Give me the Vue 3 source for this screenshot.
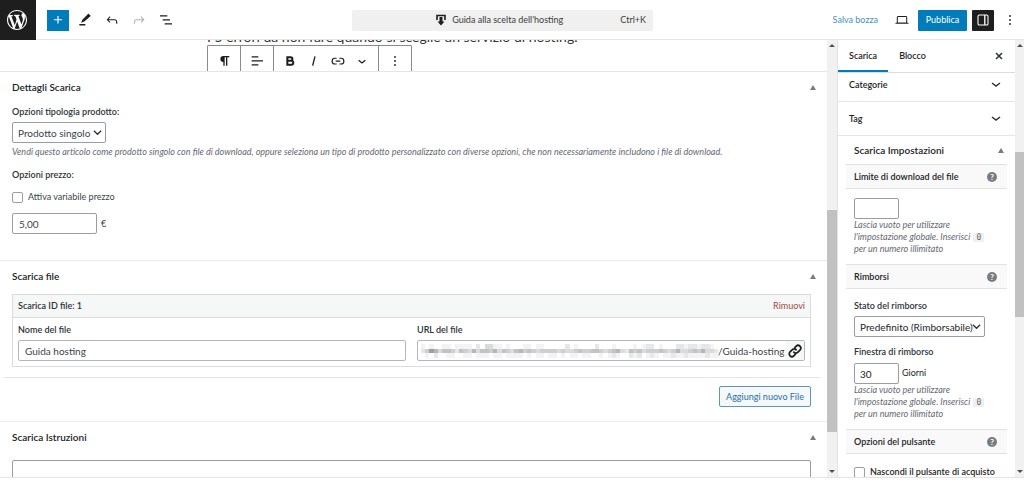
<script setup>
import { ref } from 'vue'

const productType = ref('single')
const variable = ref(false)
const price = ref('5,00')
const fileName = ref('Guida hosting')
const limit = ref('')
const refund = ref('default')
const days = ref('30')
const hideButton = ref(false)

// Mosaic levels (0 = white, 9 = darkest) that mask the private part of the URL
const mosaicRows = [
  '1010011011110203311010001101100000201000020001000010122010002212212210',
  '2486355425436355463543564543444434334544554345632545344454346334546332',
  '0102001100110111011011110101101101011011001012100212012101121121111211',
]
const mosaic = mosaicRows.flatMap((row, y) =>
  [...row].map((v, x) => ({ x, y, fill: `rgba(80,84,88,${Number(v) * 0.07})` }))
)
</script>

<template>
  <div class="editor">
    <header class="topbar">
      <div class="tools">
        <a class="logo" href="#" aria-label="WordPress">
          <svg width="24" height="24" viewBox="-2 -2 24 24" fill="currentColor">
            <path d="M20 10c0-5.51-4.49-10-10-10C4.48 0 0 4.49 0 10c0 5.52 4.48 10 10 10 5.51 0 10-4.48 10-10zM7.78 15.37L4.37 6.22c.55-.02 1.17-.08 1.17-.08.5-.06.44-1.13-.06-1.11 0 0-1.45.11-2.37.11-.18 0-.37 0-.58-.01C4.12 2.69 6.87 1.11 10 1.11c2.33 0 4.45.87 6.05 2.34-.68-.11-1.65.39-1.65 1.58 0 .74.45 1.36.9 2.1.35.61.55 1.36.55 2.46 0 1.49-1.4 5-1.4 5l-3.03-8.37c.54-.02.82-.17.82-.17.5-.05.44-1.25-.06-1.22 0 0-1.44.12-2.38.12-.87 0-2.33-.12-2.33-.12-.5-.03-.56 1.2-.06 1.22l.92.08 1.26 3.41zM17.41 10c.24-.64.74-1.87.43-4.25.7 1.29 1.05 2.71 1.05 4.25 0 3.29-1.73 6.24-4.4 7.78.97-2.59 1.94-5.2 2.92-7.78zM6.1 18.09C3.12 16.65 1.11 13.53 1.11 10c0-1.3.23-2.48.72-3.59C3.25 10.3 4.67 14.2 6.1 18.09zm4.03-6.63l2.58 6.98c-.86.29-1.76.45-2.71.45-.79 0-1.57-.11-2.29-.33.81-2.38 1.62-4.74 2.42-7.1z"/>
          </svg>
        </a>
        <button class="add" aria-label="Aggiungi blocco">
          <svg width="14" height="14" viewBox="0 0 24 24" fill="currentColor"><path d="M11 12.500V18h2v-5.500H19v-2h-6V5h-2v5.500H5v2z"/></svg>
        </button>
        <button aria-label="Strumenti">
          <svg width="16" height="16" viewBox="0 0 24 24" fill="currentColor"><path d="M20.100 5.100 17.900 3c-.4-.4-1-.4-1.400 0L8 11.700 6.200 16l4.800-1.600 9.100-8.100c.4-.3.400-.9 0-1.200zM3.500 18h9v2.200h-9z"/></svg>
        </button>
        <button aria-label="Annulla">
          <svg width="16" height="16" viewBox="0 0 24 24" fill="currentColor"><path d="M18.300 11.700c-.6-.6-1.400-.9-2.300-.9H6.700l2.900-3.300-1.100-1-4.500 5L8.500 16l1-1-2.700-2.700H16c.5 0 .9.200 1.300.5 1 1 1 3.400 1 4.500v.300h1.700v-.2c0-1.500 0-4.300-1.700-5.700z"/></svg>
        </button>
        <button class="dim" aria-label="Ripeti" disabled>
          <svg width="16" height="16" viewBox="0 0 24 24" fill="currentColor"><path d="M15.600 6.500l-1.100 1 2.900 3.300H8c-.9 0-1.700.3-2.300.9-1.400 1.500-1.400 4.200-1.400 5.600v.2h1.500v-.3c0-1.100 0-3.500 1-4.500.3-.3.700-.5 1.300-.5h9.200L14.500 15l1.100 1.100 4.600-4.600-4.600-5z"/></svg>
        </button>
        <button aria-label="Panoramica documento">
          <svg width="16" height="16" viewBox="0 0 24 24" fill="currentColor"><path d="M3 5h11v1.800H3zM7 11h11v1.800H7zM10 17h11v1.800H10z"/></svg>
        </button>
      </div>
      <button class="command">
        <svg width="10" height="12" viewBox="0 0 10 12"><path d="M1 6V1.500h8V6" fill="none" stroke="#1e1e1e" stroke-width="1.600"/><path d="M3.500 3h3v4.500h2L5 11.500 1.500 7.500h2z" fill="#1e1e1e"/></svg>
        <span>Guida alla scelta dell'hosting</span>
        <kbd>Ctrl+K</kbd>
      </button>
      <div class="actions">
        <button class="save">Salva bozza</button>
        <button class="preview" aria-label="Anteprima">
          <svg width="16" height="16" viewBox="0 0 24 24" fill="currentColor"><path d="M20.500 16h-.7V8c0-1.100-.9-2-2-2H6.200c-1.100 0-2 .9-2 2v8h-.7c-.8 0-1.500.7-1.500 1.500h20c0-.8-.7-1.500-1.500-1.500zM5.700 8c0-.3.200-.5.500-.5h11.600c.3 0 .5.200.5.500v7.600H5.700V8z"/></svg>
        </button>
        <button class="publish">Pubblica</button>
        <button class="panel-toggle" aria-label="Impostazioni">
          <svg width="16" height="16" viewBox="0 0 24 24"><rect x="4.500" y="4.500" width="15" height="15" rx="2" fill="none" stroke="#fff" stroke-width="1.600"/><path d="M14.700 4.500v15" stroke="#fff" stroke-width="2"/></svg>
        </button>
        <button class="more" aria-label="Opzioni">
          <svg width="4" height="12" viewBox="0 0 4 12" fill="currentColor"><circle cx="2" cy="2" r="0.900"/><circle cx="2" cy="6" r="0.900"/><circle cx="2" cy="10" r="0.900"/></svg>
        </button>
      </div>
    </header>

    <div class="workspace">
      <main class="content">
        <section class="canvas">
          <p>I 5 errori da non fare quando si sceglie un servizio di hosting.</p>
          <div class="blockbar">
            <div class="cell"><button aria-label="Paragrafo"><svg width="16" height="16" viewBox="0 0 24 24" fill="currentColor"><path d="M11 4.500a4.500 4.500 0 0 0 0 9V19h2V6.500h2V19h2V6.500h3v-2z"/></svg></button></div>
            <div class="cell"><button aria-label="Allinea"><svg width="16" height="16" viewBox="0 0 24 24" fill="currentColor"><path d="M4 5h10v1.800H4zM4 11h17v1.800H4zM4 17h10v1.800H4z"/></svg></button></div>
            <div class="cell wide">
              <button aria-label="Grassetto"><svg width="16" height="16" viewBox="0 0 24 24" fill="none" stroke="currentColor" stroke-width="3"><path d="M8 6.500h5a2.600 2.600 0 0 1 0 5.200H8zM8 11.700h6a2.900 2.900 0 0 1 0 5.800H8z"/></svg></button>
              <button aria-label="Corsivo"><svg width="16" height="16" viewBox="0 0 24 24" fill="none" stroke="currentColor" stroke-width="2"><path d="M13.500 5 10 19"/></svg></button>
              <button aria-label="Link"><svg width="16" height="16" viewBox="0 0 24 24" fill="none" stroke="currentColor" stroke-width="1.800"><path d="M10 16.500H7.500a4.300 4.300 0 0 1 0-8.600H10M14 7.900h2.500a4.300 4.300 0 0 1 0 8.600H14M8.500 12.200h7"/></svg></button>
              <button aria-label="Altro"><svg width="16" height="16" viewBox="0 0 24 24" fill="none" stroke="currentColor" stroke-width="2"><path d="m7 11 5 4 5-4"/></svg></button>
            </div>
            <div class="cell"><button aria-label="Opzioni blocco"><svg width="4" height="12" viewBox="0 0 4 12" fill="currentColor"><circle cx="2" cy="2" r="0.900"/><circle cx="2" cy="6" r="0.900"/><circle cx="2" cy="10" r="0.900"/></svg></button></div>
          </div>
        </section>

        <section class="box details">
          <div class="box-head"><h2>Dettagli Scarica</h2><button class="tri" aria-label="Comprimi"></button></div>
          <label class="title" for="ptype">Opzioni tipologia prodotto:</label>
          <div class="select short">
            <select id="ptype" v-model="productType"><option value="single">Prodotto singolo</option></select>
            <svg width="9" height="9" viewBox="0 0 10 10"><path d="m1 3 4 4 4-4"/></svg>
          </div>
          <p class="hint">Vendi questo articolo come prodotto singolo con file di download, oppure seleziona un tipo di prodotto personalizzato con diverse opzioni, che non necessariamente includono i file di download.</p>
          <label class="title price-title" for="price">Opzioni prezzo:</label>
          <label class="check"><input v-model="variable" type="checkbox">Attiva variabile prezzo</label>
          <div class="price"><input id="price" v-model="price" type="text"><span>€</span></div>
        </section>

        <section class="box files">
          <div class="box-head"><h2>Scarica file</h2><button class="tri" aria-label="Comprimi"></button></div>
          <div class="file-card">
            <div class="file-head"><strong>Scarica ID file: 1</strong><a href="#">Rimuovi</a></div>
            <div class="file-grid">
              <div class="field"><label for="fname">Nome del file</label><input id="fname" v-model="fileName" type="text"></div>
              <div class="field">
                <label for="furl">URL del file</label>
                <div class="url">
                  <svg class="mosaic" viewBox="0 0 70 3" preserveAspectRatio="none" shape-rendering="crispEdges"><rect v-for="(c, i) in mosaic" :key="i" :x="c.x" :y="c.y" width="1" height="1" :fill="c.fill"/></svg>
                  <input id="furl" type="text" value="/Guida-hosting.pdf">
                  <button aria-label="Carica un file"><svg width="14" height="14" viewBox="0 0 24 24" fill="none" stroke="currentColor" stroke-width="3" stroke-linecap="round"><path d="M10 14a4.500 4.500 0 0 0 6.500.3l4-4a4.500 4.500 0 0 0-6.500-6.500l-2.300 2.300M14 10a4.500 4.500 0 0 0-6.500-.3l-4 4a4.500 4.500 0 0 0 6.500 6.500l2.300-2.300"/></svg></button>
                </div>
              </div>
            </div>
          </div>
          <div class="file-footer"><button>Aggiungi nuovo File</button></div>
        </section>

        <section class="box notes">
          <div class="box-head"><h2>Scarica Istruzioni</h2><button class="tri" aria-label="Comprimi"></button></div>
          <textarea aria-label="Scarica Istruzioni"></textarea>
        </section>
      </main>
      <div class="track track-main"><i class="up"></i><b></b><i class="down"></i></div>

      <aside class="sidebar">
        <div class="tabs">
          <button class="active">Scarica</button><button>Blocco</button>
          <button class="close" aria-label="Chiudi"><svg width="8" height="8" viewBox="0 0 8 8"><path d="m1 1 6 6M7 1 1 7"/></svg></button>
        </div>
        <button class="fold first">Categorie<svg width="10" height="10" viewBox="0 0 10 10"><path d="m1 3 4 3 4-3"/></svg></button>
        <button class="fold">Tag<svg width="10" height="10" viewBox="0 0 10 10"><path d="m1 3 4 3 4-3"/></svg></button>
        <div class="settings">
          <div class="settings-head"><h2>Scarica Impostazioni</h2><button class="tri" aria-label="Comprimi"></button></div>
          <h3>Limite di download del file<span class="help">?</span></h3>
          <div class="group">
            <input v-model="limit" class="small" type="text" aria-label="Limite di download del file">
            <p class="note">Lascia vuoto per utilizzare l'impostazione globale. Inserisci <code>0</code> per un numero illimitato</p>
          </div>
          <h3>Rimborsi<span class="help">?</span></h3>
          <div class="group">
            <label class="title" for="refund">Stato del rimborso</label>
            <div class="select">
              <select id="refund" v-model="refund"><option value="default">Predefinito (Rimborsabile)</option></select>
              <svg width="9" height="9" viewBox="0 0 10 10"><path d="m1 3 4 4 4-4"/></svg>
            </div>
            <label class="title window" for="days">Finestra di rimborso</label>
            <div class="days"><input id="days" v-model="days" class="small" type="text"><span>Giorni</span></div>
            <p class="note">Lascia vuoto per utilizzare l'impostazione globale. Inserisci <code>0</code> per un numero illimitato</p>
          </div>
          <h3>Opzioni del pulsante<span class="help">?</span></h3>
          <div class="group last"><label class="check"><input v-model="hideButton" type="checkbox">Nascondi il pulsante di acquisto</label></div>
        </div>
      </aside>
      <div class="track track-side"><i class="up"></i><b></b><i class="down"></i></div>
    </div>
  </div>
</template>

<style>
body { margin: 0; background: #fff; }
</style>

<style scoped>
* { box-sizing: border-box; }
.editor { height: 100vh; padding-bottom: 5px; display: flex; flex-direction: column; overflow: hidden; font: 9px/12px Lato, "Open Sans", sans-serif; color: #3c434a; background: #fff; }
button, input, select, textarea { font: inherit; color: inherit; margin: 0; padding: 0; }
button { border: 0; background: none; display: flex; align-items: center; justify-content: center; }
h2, h3, p { margin: 0; }
a { text-decoration: none; }
svg { flex: none; }

.topbar { flex: none; height: 40px; display: grid; grid-template-columns: 1fr 320px 1fr; align-items: center; border-bottom: 1px solid #e6e6e6; color: #1e1e1e; }
.logo { width: 36px; height: 40px; margin-right: 5px; background: #1e1e1e; color: #fff; display: flex; align-items: center; justify-content: center; padding-right: 3px; }
.tools { display: flex; align-items: center; gap: 6px; }
.tools button { width: 21px; height: 21px; }
.tools .add { background: #007cba; color: #fff; width: 22px; margin-right: -1px; }
.tools .dim { color: #b0b0b0; }
.command { width: 301px; height: 21px; background: #f0f0f0; border-radius: 2px; gap: 6px; padding: 0 7px; color: #3c3c3c; }
.command svg { margin-left: auto; }
.command kbd { font: inherit; margin-left: 51px; }
.actions { display: flex; align-items: center; justify-content: flex-end; padding-right: 12px; }
.save { color: #4b8fbb; margin-right: 16px; }
.preview { margin-right: 8px; }
.publish { background: #007cba; color: #fff; width: 49px; height: 21px; border-radius: 1px; margin-right: 5px; }
.panel-toggle { background: #1e1e1e; width: 22px; height: 21px; border-radius: 1px; margin-right: 14px; }

.workspace { flex: 1; min-height: 0; display: flex; border-bottom: 1px solid #e2e4e7; }
.content { flex: 1; min-width: 0; overflow: hidden; }
.canvas { height: 32px; overflow: hidden; padding-left: 207px; border-bottom: 1px solid #e6e6e6; }
.canvas p { font-size: 14px; line-height: 16px; margin-top: -11px; color: #333; white-space: nowrap; }
.blockbar { display: inline-flex; height: 32px; border: 1px solid #8a8a8a; border-radius: 1px; color: #1e1e1e; background: #fff; }
.cell { display: flex; align-items: center; justify-content: center; width: 33px; border-right: 1px solid #8a8a8a; }
.cell:last-child { border-right: 0; width: 32px; }
.cell.wide { width: 105px; justify-content: space-around; padding: 0 4px; }

.box { border-bottom: 1px solid #ececec; padding: 0 16px 0 12px; }
.box-head { height: 30px; display: flex; align-items: center; justify-content: space-between; margin-right: -6px; }
h2 { font-size: 10px; line-height: 14px; font-weight: 600; color: #1d2327; }
.tri { width: 8px; height: 8px; }
.tri::before { content: ""; border: 3px solid transparent; border-top: 0; border-bottom: 5px solid #787c82; }
.title { display: block; font-weight: 600; line-height: 12px; color: #2c3338; }
.details { height: 189px; }
.details .title { margin-top: 4px; }
.select { position: relative; display: flex; width: 131px; height: 21px; margin-top: 4px; }
.select.short { width: 94px; }
.select select { width: 100%; appearance: none; border: 1px solid #9a9da1; border-radius: 2px; background: #fff; padding: 0 5px; font-size: 10px; line-height: 14px; }
.select svg { position: absolute; right: 4px; top: 6px; pointer-events: none; }
.select path, .fold path, .close path { fill: none; stroke: #2c3338; stroke-width: 1.500; }
.hint { font-style: italic; color: #646970; margin-top: 3px; white-space: nowrap; }
.details .price-title { margin-top: 11px; }
.check { display: flex; align-items: center; gap: 5px; }
.check input { appearance: none; flex: none; width: 11px; height: 11px; border: 1px solid #9a9da1; border-radius: 2px; background: #fff; }
.details .check { margin-top: 10px; }
.price { display: flex; align-items: center; gap: 4px; margin-top: 10px; }
input[type="text"] { height: 21px; border: 1px solid #9a9da1; border-radius: 2px; padding: 0 6px; min-width: 0; background: #fff; font-size: 10px; line-height: 14px; }
.price input { width: 85px; }

.files { height: 161px; }
.file-card { border: 1px solid #dcdcde; margin-top: 3px; }
.file-head { height: 23px; background: #f6f7f7; border-bottom: 1px solid #dcdcde; display: flex; align-items: center; justify-content: space-between; padding: 0 5px; }
.file-head strong { font-weight: 600; color: #2c3338; }
.file-head a { color: #9a4b3c; }
.file-grid { display: grid; grid-template-columns: 1fr 1fr; gap: 11px; padding: 6px 5px 5px; }
.field { display: flex; flex-direction: column; gap: 4px; min-width: 0; }
.field label { font-weight: 600; color: #2c3338; }
.url { display: flex; height: 21px; border: 1px solid #b4b7ba; border-radius: 2px; overflow: hidden; }
.field input[type="text"] { border-color: #b4b7ba; }
.mosaic { flex: 1; min-width: 0; height: 14px; margin: 3px 0 0 3px; }
.url input[type="text"] { border: 0; padding: 0; height: 19px; width: 67px; flex: none; }
.url button { width: 19px; background: #f6f7f7; color: #1e1e1e; }
.file-footer { margin: 10px -9px 0 -8px; padding: 8px 9px 0 0; border-top: 1px solid #e4e4e6; display: flex; justify-content: flex-end; }
.file-footer button { width: 92px; height: 21px; border: 1px solid #5b95c4; border-radius: 2px; background: #f6f7f7; color: #2271b1; }
.notes { border: 0; }
.notes textarea { display: block; width: 100%; height: 40px; margin-top: 8px; border: 1px solid #9a9da1; border-radius: 2px; resize: none; }

.track { flex: none; background: #f1f1f1; display: flex; flex-direction: column; align-items: center; padding: 4px 0; }
.track b { width: 100%; background: #c1c1c1; }
.track i { border: 3px solid transparent; }
.track .up { border-top: 0; border-bottom-color: #505050; }
.track .down { border-bottom: 0; border-top-color: #505050; margin-top: auto; }
.track-main { width: 11px; border-right: 1px solid #e4e4e4; }
.track-main b { margin-top: 163px; height: 222px; }
.track-side { width: 9px; }
.track-side b { margin-top: 105px; height: 165px; }

.sidebar { flex: none; width: 177px; overflow: hidden; color: #1e1e1e; }
.tabs { display: flex; height: 33px; border-bottom: 1px solid #ddd; }
.tabs button { font-weight: 600; padding: 0 11px; }
.tabs .active { border-bottom: 2px solid #007cba; padding-top: 2px; }
.tabs .close { margin-left: auto; padding: 0 12px; }
.fold { width: 100%; height: 34px; border-bottom: 1px solid #e6e6e6; justify-content: space-between; padding: 0 14px 0 11px; font-weight: 600; }
.fold.first { height: 29px; padding-bottom: 4px; }
.settings { padding: 0 8px; }
.settings-head { height: 28px; display: flex; align-items: center; justify-content: space-between; padding: 0 2px 0 8px; }
h3 { height: 25px; display: flex; align-items: center; justify-content: space-between; background: #f9f9f9; border: 1px solid #e2e2e4; border-width: 1px 0; padding: 0 10px 0 8px; font-size: 9px; line-height: 12px; font-weight: 600; color: #1d2327; }
.help { width: 10px; height: 10px; border-radius: 50%; background: #787c82; color: #fff; font-size: 8px; line-height: 10px; font-weight: 700; text-align: center; }
.group { padding: 9px 8px; }
.group .title { margin-top: 2px; }
input[type="text"].small { width: 45px; display: block; padding: 0 5px; }
.note { font-style: italic; color: #646970; padding-right: 10px; }
code { font: 8px/10px "DejaVu Sans Mono", monospace; background: #f0f0f1; padding: 0 3px; margin-left: 1px; }
.group .window { margin-top: 9px; }
.days { display: flex; gap: 3px; margin-top: 5px; }
.days span { line-height: 20px; }
.last { padding-top: 12px; white-space: nowrap; font-weight: 600; }
</style>
